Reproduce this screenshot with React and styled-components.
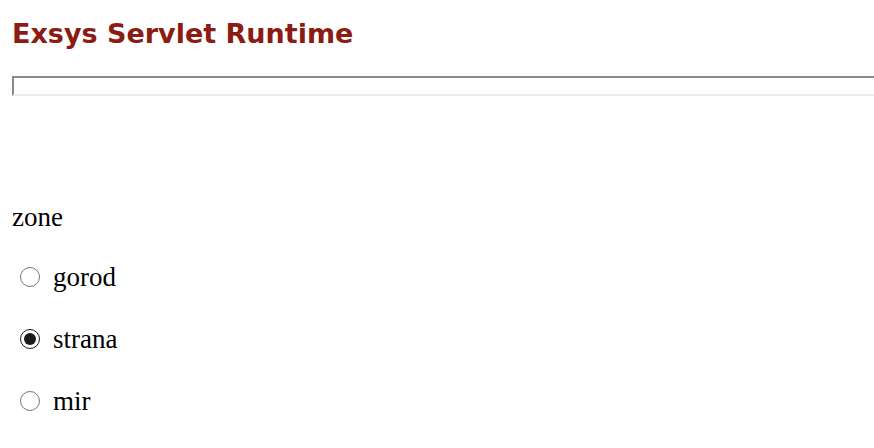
import React from "react";
import styled, { createGlobalStyle } from "styled-components";

const Global = createGlobalStyle`
  html, body { margin: 0; padding: 0; background: #fff; }
  body { font-family: "Liberation Serif", "Times New Roman", serif; color: #000; overflow: hidden; }
`;

const Page = styled.div`
  padding: 17px 0 0 12px;
  width: 874px;
  box-sizing: border-box;
`;

const Title = styled.h1`
  margin: 0;
  font-family: "DejaVu Sans", Verdana, sans-serif;
  font-weight: bold;
  font-size: 27px;
  line-height: 34px;
  color: #8b1c14;
`;

const Frame = styled.div`
  margin-top: 25px;
  width: 900px;
  height: 20px;
  box-sizing: border-box;
  border-top: 2px solid #8a8a8a;
  border-left: 2px solid #8a8a8a;
  border-bottom: 2px solid #ececec;
  background: #fff;
`;

const Form = styled.form`
  margin-top: 106px;
  font-size: 27px;
  line-height: 30px;
`;

const Label = styled.div`
  margin-bottom: 30px;
`;

const Option = styled.label`
  display: flex;
  align-items: center;
  height: 30px;
  margin-bottom: 32px;
`;

const Radio = styled.input.attrs({ type: "radio" })`
  width: 20px;
  height: 20px;
  margin: 0 13px 0 8px;
  accent-color: #1a1a1a;
`;

const options = [
  { value: "gorod", checked: false },
  { value: "strana", checked: true },
  { value: "mir", checked: false },
];

export default function App() {
  return (
    <>
      <Global />
      <Page>
        <Title>Exsys Servlet Runtime</Title>
        <Frame />
        <Form>
          <Label>zone</Label>
          {options.map((o) => (
            <Option key={o.value}>
              <Radio name="zone" value={o.value} defaultChecked={o.checked} />
              {o.value}
            </Option>
          ))}
        </Form>
      </Page>
    </>
  );
}
